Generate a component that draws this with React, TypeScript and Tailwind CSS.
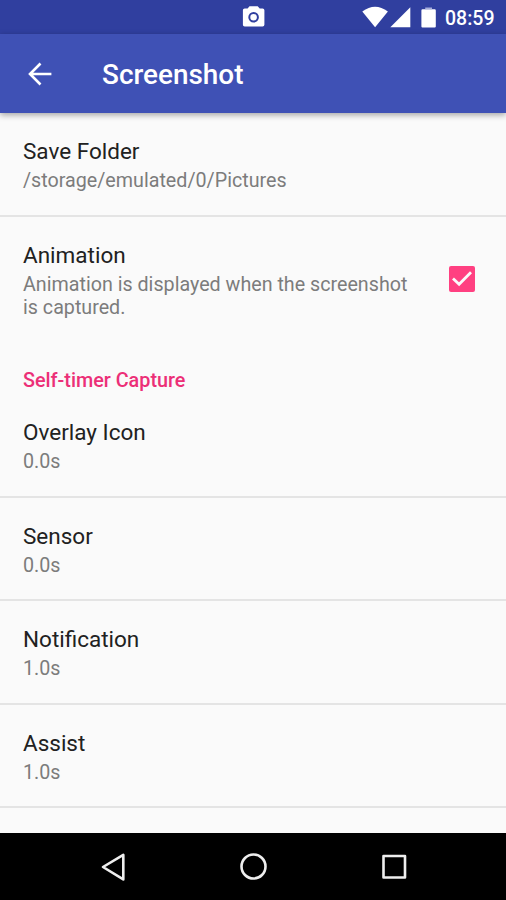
type RowProps = {
  title: string;
  summary: string;
  height: string;
  padding?: string;
  divider?: boolean;
  checked?: boolean;
};

function Check() {
  return (
    <svg className="mt-[26px] h-[26px] w-[26px] shrink-0" viewBox="0 0 26 26">
      <rect width="26" height="26" rx="2" fill="#ff4081" />
      <path d="M4 12.500 L10.100 18.300 L22 6.300" fill="none" stroke="#fafafa" strokeWidth="2.800" />
    </svg>
  );
}

function Row({ title, summary, height, padding = "pt-[23px]", divider = true, checked }: RowProps) {
  return (
    <div
      className={`flex shrink-0 justify-between pr-[31px] pl-[23px] ${height} ${padding} ${
        divider ? "border-b-2 border-[#e4e4e4]" : ""
      }`}
    >
      <div className="max-w-[400px]">
        <div className="text-[22.5px] leading-[30px] text-[#212121]">{title}</div>
        <div className="mt-[3px] text-[19.7px] leading-[23px] text-[#7c7c7c]">{summary}</div>
      </div>
      {checked && <Check />}
    </div>
  );
}

function StatusBar() {
  return (
    <div className="flex h-[34px] shrink-0 bg-[#303f9f] text-white">
      <svg className="h-[34px] w-[440px]" viewBox="0 0 440 34" fill="#ffffff">
        <path d="M249.500 6.200h8.200l2 2.200h2.900q1.800 0 1.800 1.800v14.600q0 1.800-1.800 1.800h-17.900q-1.800 0-1.800-1.800V10.200q0-1.800 1.800-1.800h2.900z" />
        <circle cx="253.600" cy="17.300" r="4.300" fill="none" stroke="#303f9f" strokeWidth="2" />
        <path d="M362.300 11.500q12.700-9.600 25.600 0L375.100 27.300z" />
        <path d="M410.300 7.200v20h-20z" />
        <path d="M422.500 9.300h12.200q1.100 0 1.100 1.100v16q0 1.100-1.100 1.100h-12.200q-1.100 0-1.100-1.100v-16q0-1.100 1.100-1.100z" />
        <path d="M425.200 7.500h6.800v1.800h-6.800z" fill="#a7aedb" />
      </svg>
      <div className="ml-[5px] text-[19.5px] leading-[37px] font-medium">08:59</div>
    </div>
  );
}

function Toolbar() {
  return (
    <div className="z-10 flex h-[79px] shrink-0 items-center bg-[#3f51b5] text-white shadow-[0_2px_6px_rgba(0,0,0,0.35)]">
      <svg className="ml-[28px] h-[24px] w-[24px]" viewBox="0 0 24 24" fill="none" stroke="#fff" strokeWidth="2.600">
        <path d="M12.500 1.500L2 12l10.500 10.500M2 12h21.400" />
      </svg>
      <div className="mt-[2px] ml-[50px] text-[27.9px] leading-[32px] font-medium">Screenshot</div>
    </div>
  );
}

function NavBar() {
  return (
    <div className="flex h-[67px] shrink-0 bg-black">
      <svg className="h-[67px] w-[506px]" viewBox="0 0 506 67" fill="none" stroke="#eeeeee" strokeWidth="2.600" strokeLinejoin="round">
        <path d="M123.300 21.800v24.600L103 34z" />
        <circle cx="253.500" cy="33.500" r="12" />
        <rect x="383.500" y="23" width="21.500" height="21.500" />
      </svg>
    </div>
  );
}

export default function App() {
  return (
    <div className="flex h-[900px] w-[506px] flex-col overflow-hidden bg-[#fafafa] font-[Roboto,sans-serif]">
      <StatusBar />
      <Toolbar />
      <div className="flex min-h-0 flex-1 flex-col">
        <Row title="Save Folder" summary="/storage/emulated/0/Pictures" height="h-[104px]" />
        <Row
          title="Animation"
          summary="Animation is displayed when the screenshot is captured."
          height="h-[128px]"
          divider={false}
          checked
        />
        <div className="h-[68px] shrink-0 pt-[22px] pl-[23px] text-[19.8px] leading-[28px] font-medium text-[#ec2f77]">
          Self-timer Capture
        </div>
        <Row title="Overlay Icon" summary="0.0s" height="h-[85px]" padding="pt-[4px]" />
        <Row title="Sensor" summary="0.0s" height="h-[103px]" />
        <Row title="Notification" summary="1.0s" height="h-[104px]" />
        <Row title="Assist" summary="1.0s" height="h-[103px]" />
      </div>
      <NavBar />
    </div>
  );
}
